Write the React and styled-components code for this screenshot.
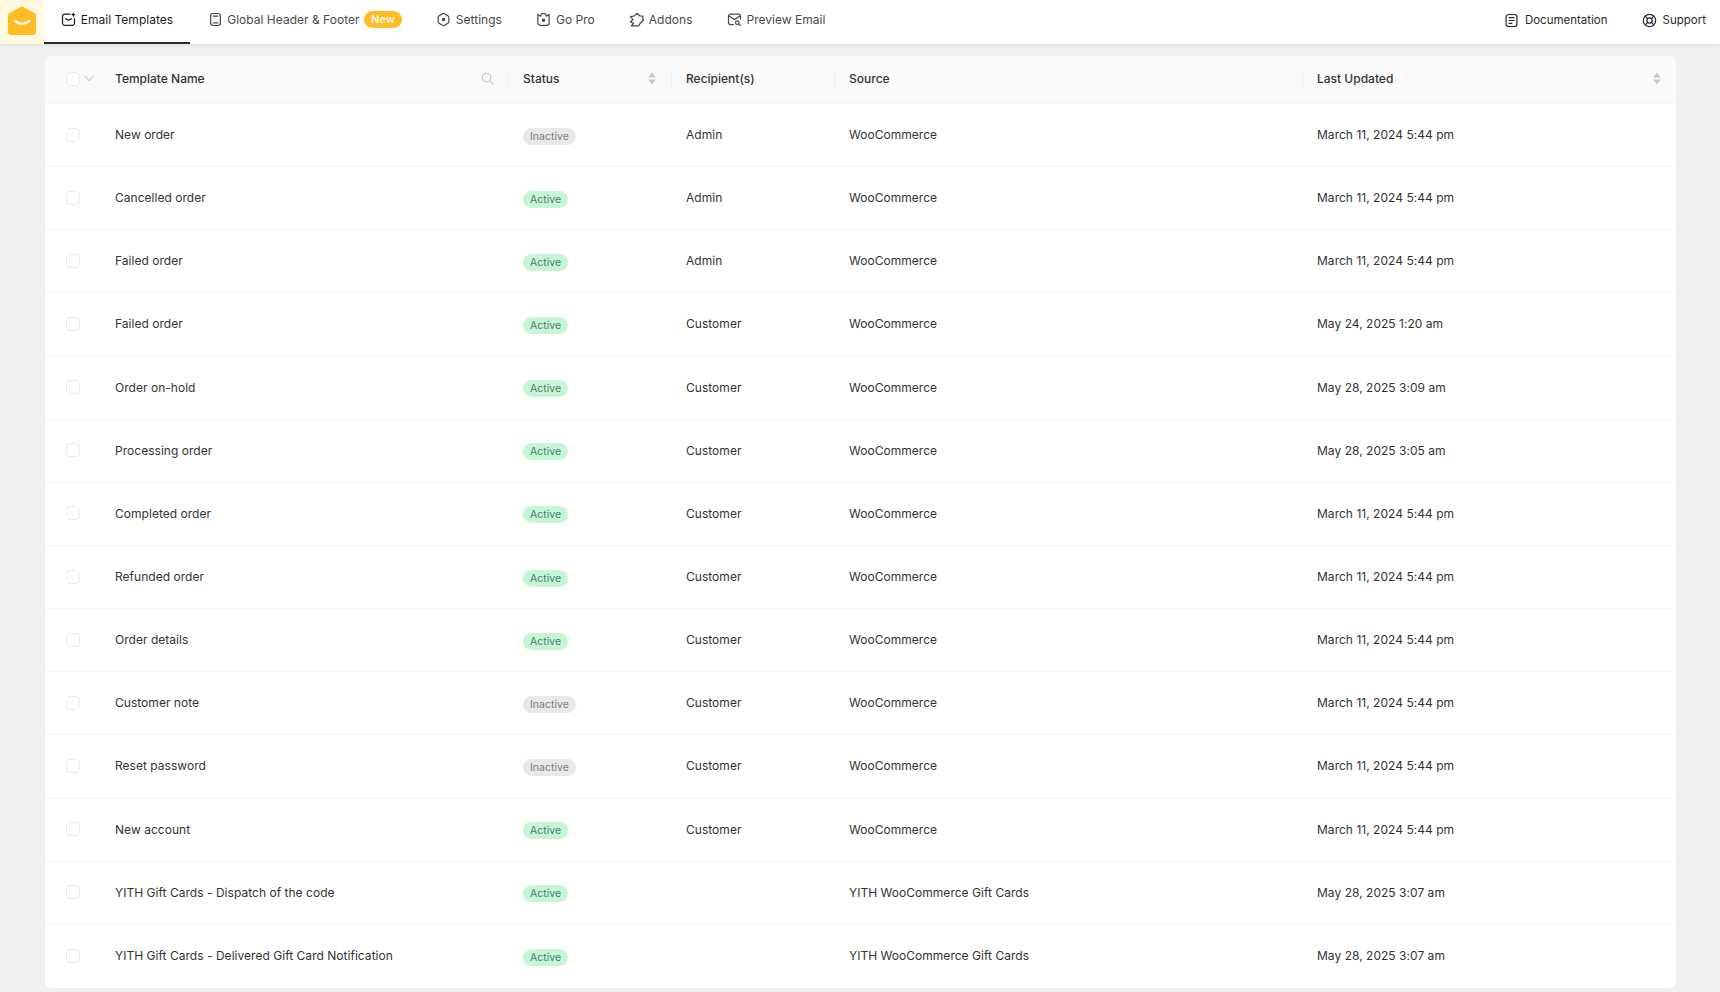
import React from 'react';
import styled, { createGlobalStyle } from 'styled-components';

const GlobalStyle = createGlobalStyle`
  html, body {
    margin: 0;
    padding: 0;
    background: #f0f0f1;
    font-family: Inter, "Liberation Sans", sans-serif;
    color: #2a2a2a;
  }
  * { box-sizing: border-box; }
`;

const Page = styled.div`
  width: 1720px;
  height: 992px;
  overflow: hidden;
  display: flex;
  flex-direction: column;
`;

const TopBar = styled.header`
  height: 44px;
  flex: none;
  display: flex;
  align-items: stretch;
  background: #fff;
  box-shadow: 0 1px 4px rgba(0, 0, 0, 0.07);
`;

const LogoBox = styled.div`
  width: 44px;
  padding-bottom: 3px;
  display: flex;
  align-items: center;
  justify-content: center;
  background: #fff8e0;
`;

const Tab = styled.a`
  display: flex;
  align-items: center;
  gap: 4.5px;
  padding: 0 17.25px 3px;
  font-size: 12px;
  letter-spacing: 0.02px;
  color: ${p => (p.$active ? '#1d1d1d' : '#4a4a4a')};
  border-bottom: 2px solid ${p => (p.$active ? '#2b2b2b' : 'transparent')};
`;

const RightLinks = styled.div`
  margin-left: auto;
  display: flex;
  align-items: stretch;
`;

const SideLink = styled(Tab)`
  color: #2a2a2a;
  padding: 0 14px 2px 20px;
  gap: 6px;
  font-size: 11.5px;
  letter-spacing: 0;
`;

const NewBadge = styled.span`
  padding: 0 7px;
  height: 17px;
  line-height: 17px;
  border-radius: 9px;
  background: #ffbc25;
  color: #fff;
  font-size: 11px;
  font-weight: 500;
`;

const Main = styled.main`
  flex: 1;
  padding: 12px 44px 4px 45px;
  display: flex;
  min-height: 0;
`;

const Card = styled.section`
  flex: 1;
  display: flex;
  flex-direction: column;
  background: #fff;
  border-radius: 6px;
  overflow: hidden;
`;

const columns = '463px 163px 163px 468px 1fr';

const HeadRow = styled.div`
  height: 48px;
  flex: none;
  display: grid;
  grid-template-columns: ${columns};
  align-items: center;
  background: #fafafa;
  border-bottom: 1px solid #f5f5f5;
`;

const HeadCell = styled.div`
  position: relative;
  display: flex;
  align-items: center;
  height: 100%;
  padding: 0 15px 2px;
  font-size: 12px;
  font-weight: 500;
  color: #333;

  &:not(:first-child)::before {
    content: '';
    position: absolute;
    left: 0;
    top: 14px;
    bottom: 14px;
    width: 1px;
    background: #f0f0f0;
  }
`;

const NameHead = styled(HeadCell)`
  padding: 0 14px 2px 21px;
`;

const HeadIcon = styled.span`
  margin-left: auto;
  display: flex;
  color: #c8c8c8;
`;

const Check = styled.span`
  flex: none;
  width: 14px;
  height: 14px;
  border: 1px solid #e9e9e9;
  border-radius: 4px;
  background: #fff;
`;

const CaretBox = styled.span`
  display: flex;
  width: 35px;
  padding-left: 4px;
  color: #c8c8c8;
`;

const Rows = styled.div`
  flex: 1;
  display: grid;
  grid-auto-rows: 1fr;
  min-height: 0;
`;

const Row = styled.div`
  display: grid;
  grid-template-columns: ${columns};
  align-items: center;
  padding-bottom: 1px;
  border-bottom: 1px solid #f5f5f5;

  &:last-child {
    border-bottom: 0;
  }
`;

const Cell = styled.div`
  padding: 0 15px;
  font-size: 12px;
  letter-spacing: 0.03px;
  color: #333;
  white-space: nowrap;
`;

const NameCell = styled(Cell)`
  display: flex;
  align-items: center;
  gap: 35px;
  padding-left: 21px;
`;

const StatusCell = styled(Cell)`
  display: flex;
  padding-top: 3px;
`;

const Pill = styled.span`
  height: 17px;
  line-height: 17px;
  padding: 0 7px;
  border-radius: 9px;
  font-size: 10.5px;
  background: ${p => (p.$active ? '#c6f6d6' : '#e9e9e9')};
  color: ${p => (p.$active ? '#4a7f68' : '#7d7d7d')};
`;

const Glyph = ({ children, size = 15 }) => (
  <svg width={size} height={size} viewBox="0 0 16 16" fill="none" stroke="currentColor" strokeWidth="1.3" strokeLinecap="round" strokeLinejoin="round">
    {children}
  </svg>
);

const Logo = () => (
  <svg width="28" height="29" viewBox="0 0 29 30">
    <path d="M13 1 L1.4 7.6 Q0 8.5 0 10 V27 Q0 30 3 30 H26 Q29 30 29 27 V10 Q29 8.5 27.6 7.6 L16 1 Q14.5 .2 13 1 Z" fill="#ffbc25" />
    <path d="M7 15.5 Q14.5 21.5 22 15.5" fill="none" stroke="#fff" strokeWidth="2.4" strokeLinecap="round" />
  </svg>
);

const MailSmileIcon = () => (
  <Glyph>
    <path d="M9.5 2.2H4A2.4 2.4 0 0 0 1.6 4.6v7.2A2.4 2.4 0 0 0 4 14.2h8a2.4 2.4 0 0 0 2.4-2.4V7" />
    <path d="M5 7.2c1.6 1.8 4.4 1.8 6 0" />
    <path d="M13.2 1.2v3M11.7 2.7h3" />
  </Glyph>
);

const LayoutIcon = () => (
  <Glyph>
    <rect x="2.8" y="1.6" width="10.4" height="12.8" rx="2.6" />
    <path d="M5.6 4.4h4.8M5.6 11.6h4.8" />
  </Glyph>
);

const SettingsIcon = () => (
  <Glyph>
    <path d="M8 1.4c.5 0 4.3 2.3 5 2.8.5.4.7.8.7 1.3v5c0 .5-.2.9-.7 1.3-.7.5-4.500 2.800-5 2.800s-4.300-2.300-5-2.800c-.5-.4-.7-.8-.7-1.300v-5c0-.5.2-.9.7-1.300C3.700 3.700 7.500 1.400 8 1.400z" />
    <circle cx="8" cy="8" r="1.2" fill="currentColor" />
  </Glyph>
);

const CrownIcon = () => (
  <Glyph>
    <path d="M2 2.600l2.700 1.800L6.200 1.800h3.600l1.500 2.600L14 2.600v9a2.600 2.600 0 0 1-2.600 2.600H4.600A2.600 2.600 0 0 1 2 11.600z" />
    <circle cx="8" cy="8.800" r="1.200" fill="currentColor" />
  </Glyph>
);

const PuzzleIcon = () => (
  <Glyph>
    <path d="M5.800 4.200L8.600 1.400l3 2.800 3.200.2-.2 3.200 .8 1.200-3.600 3.400-1.400 2.600H2.600l2.200-2.800-3.400-1.400 2.800-2.400L1.600 5z" />
  </Glyph>
);

const MailSearchIcon = () => (
  <Glyph>
    <path d="M6.800 13.400H3.800a2.200 2.200 0 0 1-2.200-2.200V4.400a2.200 2.200 0 0 1 2.200-2.200h8.400a2.200 2.200 0 0 1 2.200 2.200V7.600" />
    <path d="M2 4.200l6 3.800 6-3.800" />
    <circle cx="11" cy="11.400" r="1.900" />
    <path d="M12.500 12.800l1.700 1.500" />
  </Glyph>
);

const DocIcon = () => (
  <Glyph>
    <rect x="2.200" y="1.600" width="11.600" height="12.800" rx="2.800" />
    <path d="M5.400 5h5.200M5.400 8h5.200M5.400 11h3" />
  </Glyph>
);

const LifebuoyIcon = () => (
  <Glyph>
    <circle cx="8" cy="8" r="6.600" />
    <circle cx="8" cy="8" r="2.800" />
    <path d="M3.400 3.400l2.600 2.600M12.600 3.400L10 6M3.400 12.600L6 10M12.600 12.600L10 10" />
  </Glyph>
);

const SearchIcon = () => (
  <svg width="13" height="13" viewBox="0 0 14 14" fill="none" stroke="currentColor" strokeWidth="1.200" strokeLinecap="round">
    <circle cx="6" cy="6" r="4.600" />
    <path d="M9.500 9.500L13 13" />
  </svg>
);

const SortIcon = () => (
  <svg width="8" height="13" viewBox="0 0 8 13" fill="currentColor">
    <path d="M4 .5L7.800 5.500H.2zM4 12.500L.2 7.500h7.600z" />
  </svg>
);

const Caret = () => (
  <svg width="10" height="7" viewBox="0 0 10 7" fill="none" stroke="currentColor" strokeWidth="1.100" strokeLinecap="round" strokeLinejoin="round">
    <path d="M.8 1l4.200 4.600L9.200 1" />
  </svg>
);

const tabs = [
  { label: 'Email Templates', icon: <MailSmileIcon />, active: true },
  { label: 'Global Header & Footer', icon: <LayoutIcon />, badge: 'New' },
  { label: 'Settings', icon: <SettingsIcon /> },
  { label: 'Go Pro', icon: <CrownIcon /> },
  { label: 'Addons', icon: <PuzzleIcon /> },
  { label: 'Preview Email', icon: <MailSearchIcon /> },
];

const MAR = 'March 11, 2024 5:44 pm';
const WOO = 'WooCommerce';
const YITH = 'YITH WooCommerce Gift Cards';

const templates = [
  ['New order', false, 'Admin', WOO, MAR],
  ['Cancelled order', true, 'Admin', WOO, MAR],
  ['Failed order', true, 'Admin', WOO, MAR],
  ['Failed order', true, 'Customer', WOO, 'May 24, 2025 1:20 am'],
  ['Order on-hold', true, 'Customer', WOO, 'May 28, 2025 3:09 am'],
  ['Processing order', true, 'Customer', WOO, 'May 28, 2025 3:05 am'],
  ['Completed order', true, 'Customer', WOO, MAR],
  ['Refunded order', true, 'Customer', WOO, MAR],
  ['Order details', true, 'Customer', WOO, MAR],
  ['Customer note', false, 'Customer', WOO, MAR],
  ['Reset password', false, 'Customer', WOO, MAR],
  ['New account', true, 'Customer', WOO, MAR],
  ['YITH Gift Cards - Dispatch of the code', true, '', YITH, 'May 28, 2025 3:07 am'],
  ['YITH Gift Cards - Delivered Gift Card Notification', true, '', YITH, 'May 28, 2025 3:07 am'],
];

export default function App() {
  return (
    <Page>
      <GlobalStyle />
      <TopBar>
        <LogoBox><Logo /></LogoBox>
        {tabs.map(t => (
          <Tab key={t.label} $active={t.active}>
            {t.icon}
            {t.label}
            {t.badge && <NewBadge>{t.badge}</NewBadge>}
          </Tab>
        ))}
        <RightLinks>
          <SideLink><DocIcon />Documentation</SideLink>
          <SideLink><LifebuoyIcon />Support</SideLink>
        </RightLinks>
      </TopBar>
      <Main>
        <Card>
          <HeadRow>
            <NameHead>
              <Check />
              <CaretBox><Caret /></CaretBox>
              Template Name
              <HeadIcon><SearchIcon /></HeadIcon>
            </NameHead>
            <HeadCell>Status<HeadIcon><SortIcon /></HeadIcon></HeadCell>
            <HeadCell>Recipient(s)</HeadCell>
            <HeadCell>Source</HeadCell>
            <HeadCell>Last Updated<HeadIcon><SortIcon /></HeadIcon></HeadCell>
          </HeadRow>
          <Rows>
            {templates.map(([name, active, recipient, source, updated], i) => (
              <Row key={i}>
                <NameCell><Check />{name}</NameCell>
                <StatusCell><Pill $active={active}>{active ? 'Active' : 'Inactive'}</Pill></StatusCell>
                <Cell>{recipient}</Cell>
                <Cell>{source}</Cell>
                <Cell>{updated}</Cell>
              </Row>
            ))}
          </Rows>
        </Card>
      </Main>
    </Page>
  );
}
